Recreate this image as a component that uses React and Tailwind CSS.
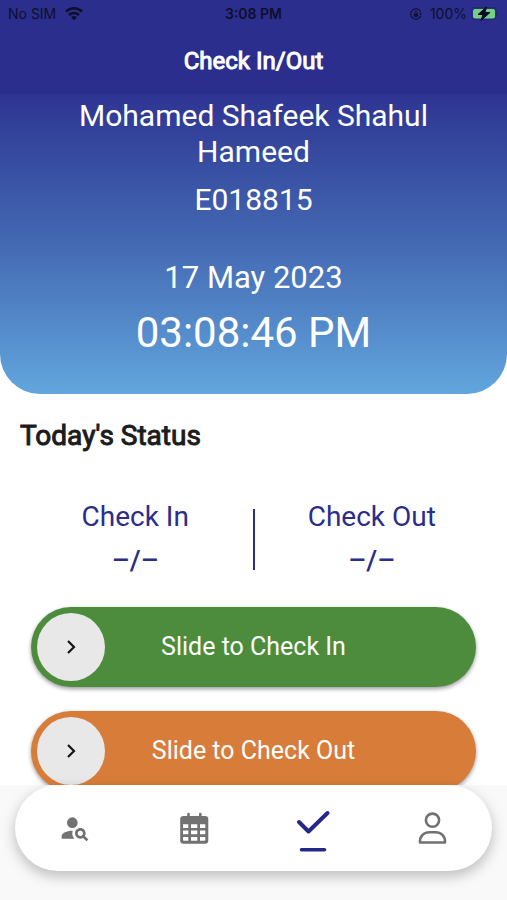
import { useState } from 'react';
import { MdPersonSearch } from 'react-icons/md';

const CalendarIcon = () => (
    <svg className="w-8 h-8" viewBox="0 0 32 32" fill="none" aria-hidden="true">
        <path d="M10.500 2v5M22.300 2v5" stroke="currentColor" strokeWidth="2.600" strokeLinecap="round" />
        <path
            fillRule="evenodd"
            fill="currentColor"
            d="M5.500 4h21.500a3.300 3.300 0 0 1 3.300 3.300V28.500a3.300 3.300 0 0 1-3.300 3.300H5.500a3.300 3.300 0 0 1-3.300-3.300V7.300A3.300 3.300 0 0 1 5.500 4zM5 12.300V16h5.300v-3.700zM13 12.300V16h6.300v-3.700zM22 12.300V16h5.300v-3.700zM5 18.600v3.700h5.300v-3.700zM13 18.600v3.700h6.300v-3.700zM22 18.600v3.700h5.300v-3.700zM5 25v2.700a1 1 0 0 0 1 1h4.300V25zM13 25v3.700h6.300V25zM22 25v3.700h4.300a1 1 0 0 0 1-1V25z"
        />
    </svg>
);

const CheckIcon = () => (
    <svg className="w-9 h-12" viewBox="0 0 36 48" fill="none" stroke="currentColor" strokeLinecap="round" aria-hidden="true">
        <path d="M4 18l9.500 9.500L32.500 9" strokeWidth="4" strokeLinejoin="round" />
        <path d="M6.500 45.700h23" strokeWidth="3.600" />
    </svg>
);

const ProfileIcon = () => (
    <svg className="w-8 h-8" viewBox="0 0 32 32" fill="none" stroke="currentColor" strokeWidth="2.600" aria-hidden="true">
        <circle cx="16.500" cy="8.200" r="6.600" />
        <path d="M4 30.500c-.4-6.500 4-10.300 9.500-10.300h6c5.500 0 9.900 3.800 9.500 10.300z" strokeLinejoin="round" />
    </svg>
);

const WifiIcon = () => (
    <svg className="w-5 h-4" viewBox="0 0 20 16" fill="none" stroke="currentColor" strokeWidth="2.600" aria-hidden="true">
        <path d="M2 5.500c4.500-4.300 11.500-4.300 16 0" />
        <path d="M5 9c2.800-2.700 7.200-2.700 10 0" />
        <path d="M10 14.300l-3-3c1.700-1.600 4.300-1.600 6 0z" fill="currentColor" stroke="none" />
    </svg>
);

const RotationLockIcon = () => (
    <svg className="w-3 h-3" viewBox="0 0 14 14" fill="none" stroke="currentColor" aria-hidden="true">
        <path d="M12.500 5A6 6 0 1 0 12.500 9" strokeWidth="1.300" />
        <path d="M10.800 6h3.200l-1.500 2.500z" fill="currentColor" stroke="none" />
        <rect x="4.500" y="6.300" width="5" height="3.800" rx=".6" fill="currentColor" stroke="none" />
        <path d="M5.500 6.500V5.300a1.500 1.500 0 0 1 3 0v1.200" />
    </svg>
);

const BatteryIcon = () => (
    <svg className="w-7 h-4" viewBox="0 0 28 16" aria-hidden="true">
        <rect x="0.500" y="1.500" width="25" height="12" rx="3.500" fill="none" stroke="#26286f" strokeWidth="1" />
        <rect x="2" y="3" width="22" height="9.500" rx="2" fill="#74d083" />
        <path d="M26.500 5.500v4c1.200-.4 1.200-3.600 0-4z" fill="#26286f" />
        <path d="M15.500 1l-8.500 7.500h5l-2 6 9-8h-5z" fill="#0b0c22" stroke="#0b0c22" strokeWidth="1" />
    </svg>
);

const ChevronIcon = () => (
    <svg className="w-4 h-4" viewBox="0 0 16 16" fill="none" stroke="currentColor" strokeWidth="2.200" aria-hidden="true">
        <path d="M5 2l6 6-6 6" />
    </svg>
);

const tabs = [
    { id: 'search', label: 'Employees', icon: <MdPersonSearch className="w-8 h-8" /> },
    { id: 'calendar', label: 'Calendar', icon: <CalendarIcon /> },
    { id: 'check', label: 'Check In/Out', icon: <CheckIcon /> },
    { id: 'profile', label: 'Profile', icon: <ProfileIcon /> },
];

function StatusBar() {
    return (
        <div className="grid grid-cols-3 items-center h-7 px-2 text-sm leading-7 text-[#0e0f2c] font-['Inter',sans-serif]">
            <div className="flex items-center gap-2">
                <span>No SIM</span>
                <WifiIcon />
            </div>
            <span className="text-center font-semibold">3:08 PM</span>
            <div className="flex items-center justify-end">
                <RotationLockIcon />
                <span className="ml-2 mr-1">100%</span>
                <BatteryIcon />
            </div>
        </div>
    );
}

function StatusColumn({ label, value }) {
    return (
        <div className="flex-1 text-center text-[#2b2d8a]">
            <p className="text-[28px] leading-9">{label}</p>
            <p className="mt-2 text-[28px] leading-9 font-medium">{value}</p>
        </div>
    );
}

function SlideButton({ label, className }) {
    return (
        <button
            type="button"
            className={`relative flex items-center justify-center w-full h-20 rounded-full text-white text-[25px] shadow-[0_2px_4px_rgba(0,0,0,0.4)] ${className}`}
        >
            <span className="absolute left-[6px] top-[6px] flex items-center justify-center w-[68px] h-[68px] rounded-full bg-[#e8e8e8] text-[#151515]">
                <ChevronIcon />
            </span>
            {label}
        </button>
    );
}

export default function App() {
    const [activeTab, setActiveTab] = useState('check');

    return (
        <div className="flex flex-col h-screen bg-white overflow-hidden font-['Roboto',sans-serif]">
            {/* Header */}
            <header className="shrink-0 bg-[#2b2e8c]">
                <StatusBar />
                <h1 className="h-[66px] text-center text-white text-[24px] leading-[66px] [-webkit-text-stroke:1px]">
                    Check In/Out
                </h1>
            </header>

            <main className="flex-1 min-h-0 overflow-hidden">
                {/* Employee card */}
                <section className="h-[300px] px-16 pt-1 rounded-b-[40px] text-center text-white bg-linear-to-b from-[#2e3492] via-[#4469b3] to-[#62a6dd]">
                    <p className="text-[30px] leading-9">Mohamed Shafeek Shahul Hameed</p>
                    <p className="mt-3 text-[30px] leading-9">E018815</p>
                    <p className="mt-[42px] text-[31px] leading-9">17 May 2023</p>
                    <p className="mt-3 text-[42px] leading-[50px]">03:08:46 PM</p>
                </section>

                <h2 className="mt-6 px-5 text-[28px] leading-9 text-[#1c1c1c] [-webkit-text-stroke:1px]">
                    Today's Status
                </h2>

                <section className="flex items-center mt-[45px] px-[18px]">
                    <StatusColumn label="Check In" value="–/–" />
                    <div className="w-[2px] h-[61px] bg-[#2b2d8a]"></div>
                    <StatusColumn label="Check Out" value="–/–" />
                </section>

                {/* Slide actions */}
                <section className="flex flex-col gap-6 mt-7 px-[31px]">
                    <SlideButton label="Slide to Check In" className="bg-[#4c8c3c]" />
                    <SlideButton label="Slide to Check Out" className="bg-[#d87d39]" />
                </section>
            </main>

            {/* Bottom navigation */}
            <footer className="relative shrink-0 px-[15px] pb-[29px] bg-[#f9f9f9]">
                <nav className="flex h-[86px] rounded-full bg-white shadow-[0_5px_14px_rgba(0,0,0,0.25)]">
                    {tabs.map((tab) => (
                        <button
                            key={tab.id}
                            type="button"
                            aria-label={tab.label}
                            onClick={() => setActiveTab(tab.id)}
                            className={`flex-1 flex items-center justify-center ${activeTab === tab.id ? 'text-[#25278a]' : 'text-[#727272]'}`}
                        >
                            {tab.icon}
                        </button>
                    ))}
                </nav>
            </footer>
        </div>
    );
}
